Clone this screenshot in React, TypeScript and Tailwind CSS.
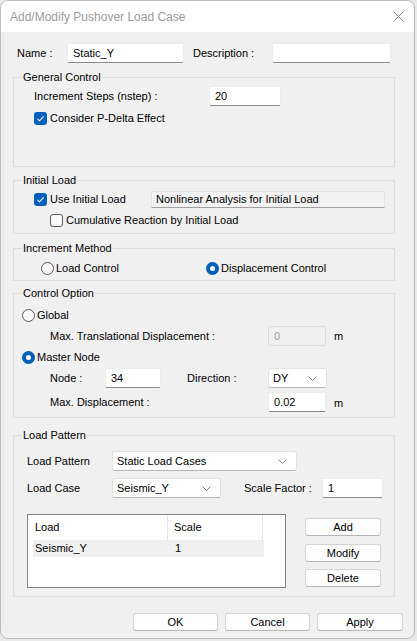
import React from 'react';

const font = { fontFamily: '"Liberation Sans", Arial, sans-serif' };

function TextBox({ value, className, disabled }: { value: string; className: string; disabled?: boolean }) {
  return (
    <div
      className={
        'h-[20px] flex items-center pl-[5px] rounded-[2px] border ' +
        (disabled
          ? 'bg-[#f0f0f0] border-[#dcdcdc] text-[#a0a0a0] '
          : 'bg-white border-[#ececec] border-b-[#8c8c8c] text-black ') +
        className
      }
    >
      {value}
    </div>
  );
}

function Chevron() {
  return (
    <svg width="9" height="5" viewBox="0 0 9 5" className="shrink-0">
      <path d="M0.5 0.5 L4.5 4.5 L8.5 0.5" fill="none" stroke="#7a7a7a" strokeWidth="0.9" />
    </svg>
  );
}

function Select({ value, className }: { value: string; className: string }) {
  return (
    <div
      className={
        'h-[20px] flex items-center justify-between pl-[4px] pr-[9px] rounded-[3px] bg-white border border-[#e2e2e2] border-b-[#b8b8b8] ' +
        className
      }
    >
      <span>{value}</span>
      <Chevron />
    </div>
  );
}

function Check({ checked }: { checked?: boolean }) {
  if (checked)
    return (
      <div className="w-[13px] h-[13px] rounded-[3px] bg-[#005fb8] flex items-center justify-center shrink-0">
        <svg width="9" height="9" viewBox="0 0 9 9">
          <path d="M1.5 4.8 L3.6 6.8 L7.6 2.4" fill="none" stroke="white" strokeWidth="1.1" />
        </svg>
      </div>
    );
  return <div className="w-[13px] h-[13px] rounded-[3px] border border-[#5c5c5c] bg-[#fbfbfb] shrink-0" />;
}

function Radio({ checked }: { checked?: boolean }) {
  if (checked)
    return (
      <div className="w-[13px] h-[13px] rounded-full bg-[#005fb8] flex items-center justify-center shrink-0">
        <div className="w-[5px] h-[5px] rounded-full bg-white" />
      </div>
    );
  return <div className="w-[13px] h-[13px] rounded-full border border-[#5c5c5c] bg-[#f7f7f7] shrink-0" />;
}

function Group({ title, className, children }: { title: string; className: string; children: React.ReactNode }) {
  return (
    <div className={'border border-[#dcdcdc] ' + className}>
      <div className="-mt-[8px] ml-[8px] px-[1px] w-fit bg-[#f0f0f0] leading-[14px] h-[14px]">{title}</div>
      {children}
    </div>
  );
}

function Btn({ label, className }: { label: string; className: string }) {
  return (
    <div
      className={
        'h-[18px] flex items-center justify-center rounded-[3px] bg-[#fdfdfd] border border-[#d4d4d4] border-b-[#b4b4b4] ' +
        className
      }
    >
      {label}
    </div>
  );
}

export default function App() {
  return (
    <div className="w-[417px] h-[641px] bg-[#e9e9e9]" style={font}>
      <div className="w-[415px] h-[639px] rounded-[8px] border border-[#bcbcbc] bg-[#f0f0f0] overflow-hidden text-[11px] text-black flex flex-col">
        {/* title bar */}
        <div className="h-[31px] bg-white flex items-center justify-between pl-[9px] pr-[10px] shrink-0">
          <span className="text-[12px] text-[#9b9b9b]">Add/Modify Pushover Load Case</span>
          <svg width="11" height="11" viewBox="0 0 11 11">
            <path d="M0.5 0.5 L10.5 10.5 M10.5 0.5 L0.5 10.5" stroke="#8a8a8a" strokeWidth="1" />
          </svg>
        </div>

        <div className="pl-[12px] pr-[19px] flex flex-col">
          {/* name row */}
          <div className="mt-[11px] h-[20px] flex items-center">
            <span className="ml-[4px] w-[50px]">Name :</span>
            <TextBox value="Static_Y" className="w-[117px]" />
            <span className="ml-[9px] w-[79px]">Description :</span>
            <TextBox value="" className="w-[119px]" />
          </div>

          {/* General Control */}
          <Group title="General Control" className="mt-[14px] pb-[38px]">
            <div className="mt-[2px] h-[20px] flex items-center">
              <span className="ml-[20px] w-[175px]">Increment Steps (nstep) :</span>
              <TextBox value="20" className="w-[72px]" />
            </div>
            <div className="mt-[2px] h-[20px] flex items-center gap-[3px] ml-[20px]">
              <Check checked />
              <span>Consider P-Delta Effect</span>
            </div>
          </Group>

          {/* Initial Load */}
          <Group title="Initial Load" className="mt-[13px] pb-[3px]">
            <div className="mt-[2px] h-[20px] flex items-center ml-[20px]">
              <div className="w-[117px] flex items-center gap-[3px]">
                <Check checked />
                <span>Use Initial Load</span>
              </div>
              <div className="w-[234px] h-[17px] flex items-center pl-[4px] bg-[#f2f2f2] border border-[#e4e4e4] border-b-[#a0a0a0]">
                Nonlinear Analysis for Initial Load
              </div>
            </div>
            <div className="mt-[1px] h-[20px] flex items-center gap-[3px] ml-[36px]">
              <Check />
              <span>Cumulative Reaction by Initial Load</span>
            </div>
          </Group>

          {/* Increment Method */}
          <Group title="Increment Method" className="mt-[14px] pb-[2px]">
            <div className="mt-[3px] h-[20px] flex items-center ml-[27px]">
              <div className="w-[165px] flex items-center gap-[2px]">
                <Radio />
                <span>Load Control</span>
              </div>
              <div className="flex items-center gap-[2px]">
                <Radio checked />
                <span>Displacement Control</span>
              </div>
            </div>
          </Group>

          {/* Control Option */}
          <Group title="Control Option" className="mt-[12px] pb-[5px]">
            <div className="mt-[5px] h-[20px] flex items-center gap-[2px] ml-[8px]">
              <Radio />
              <span>Global</span>
            </div>
            <div className="mt-[1px] h-[20px] flex items-center ml-[36px]">
              <span className="w-[218px]">Max. Translational Displacement :</span>
              <TextBox value="0" disabled className="w-[58px]" />
              <span className="ml-[8px]">m</span>
            </div>
            <div className="mt-[1px] h-[20px] flex items-center gap-[2px] ml-[8px]">
              <Radio checked />
              <span>Master Node</span>
            </div>
            <div className="mt-[1px] h-[20px] flex items-center ml-[36px]">
              <span className="w-[55px]">Node :</span>
              <TextBox value="34" className="w-[56px]" />
              <span className="ml-[26px] w-[81px]">Direction :</span>
              <Select value="DY" className="w-[59px]" />
            </div>
            <div className="mt-[4px] h-[20px] flex items-center ml-[36px]">
              <span className="w-[218px]">Max. Displacement :</span>
              <TextBox value="0.02" className="w-[58px]" />
              <span className="ml-[8px] mt-[2px]">m</span>
            </div>
          </Group>

          {/* Load Pattern */}
          <Group title="Load Pattern" className="mt-[17px] pb-[8px]">
            <div className="mt-[9px] h-[20px] flex items-center ml-[13px]">
              <span className="w-[85px]">Load Pattern</span>
              <Select value="Static Load Cases" className="w-[185px]" />
            </div>
            <div className="mt-[7px] h-[20px] flex items-center ml-[13px]">
              <span className="w-[85px]">Load Case</span>
              <Select value="Seismic_Y" className="w-[109px]" />
              <span className="ml-[23px] w-[78px]">Scale Factor :</span>
              <TextBox value="1" className="w-[61px]" />
            </div>
            <div className="mt-[16px] flex ml-[13px]">
              <div className="w-[259px] h-[74px] bg-white border border-[#828282] pl-[5px] pr-[21px]">
                <div className="h-[25px] flex">
                  <div className="w-[135px] pl-[2px] flex items-center border-r border-[#e5e5e5]">Load</div>
                  <div className="w-[95px] pl-[6px] flex items-center border-r border-[#e5e5e5]">Scale</div>
                </div>
                <div className="h-[17px] flex bg-[#f0f0f0]">
                  <div className="w-[135px] pl-[2px] flex items-center">Seismic_Y</div>
                  <div className="pl-[7px] flex items-center">1</div>
                </div>
              </div>
              <div className="ml-[19px] pt-[4px] flex flex-col">
                <Btn label="Add" className="w-[76px]" />
                <Btn label="Modify" className="w-[76px] mt-[8px]" />
                <Btn label="Delete" className="w-[76px] mt-[7px]" />
              </div>
            </div>
          </Group>
        </div>

        {/* bottom buttons */}
        <div className="mt-[16px] flex justify-end gap-[7px] pr-[11px]">
          <Btn label="OK" className="w-[85px]" />
          <Btn label="Cancel" className="w-[85px]" />
          <Btn label="Apply" className="w-[86px]" />
        </div>
      </div>
    </div>
  );
}
